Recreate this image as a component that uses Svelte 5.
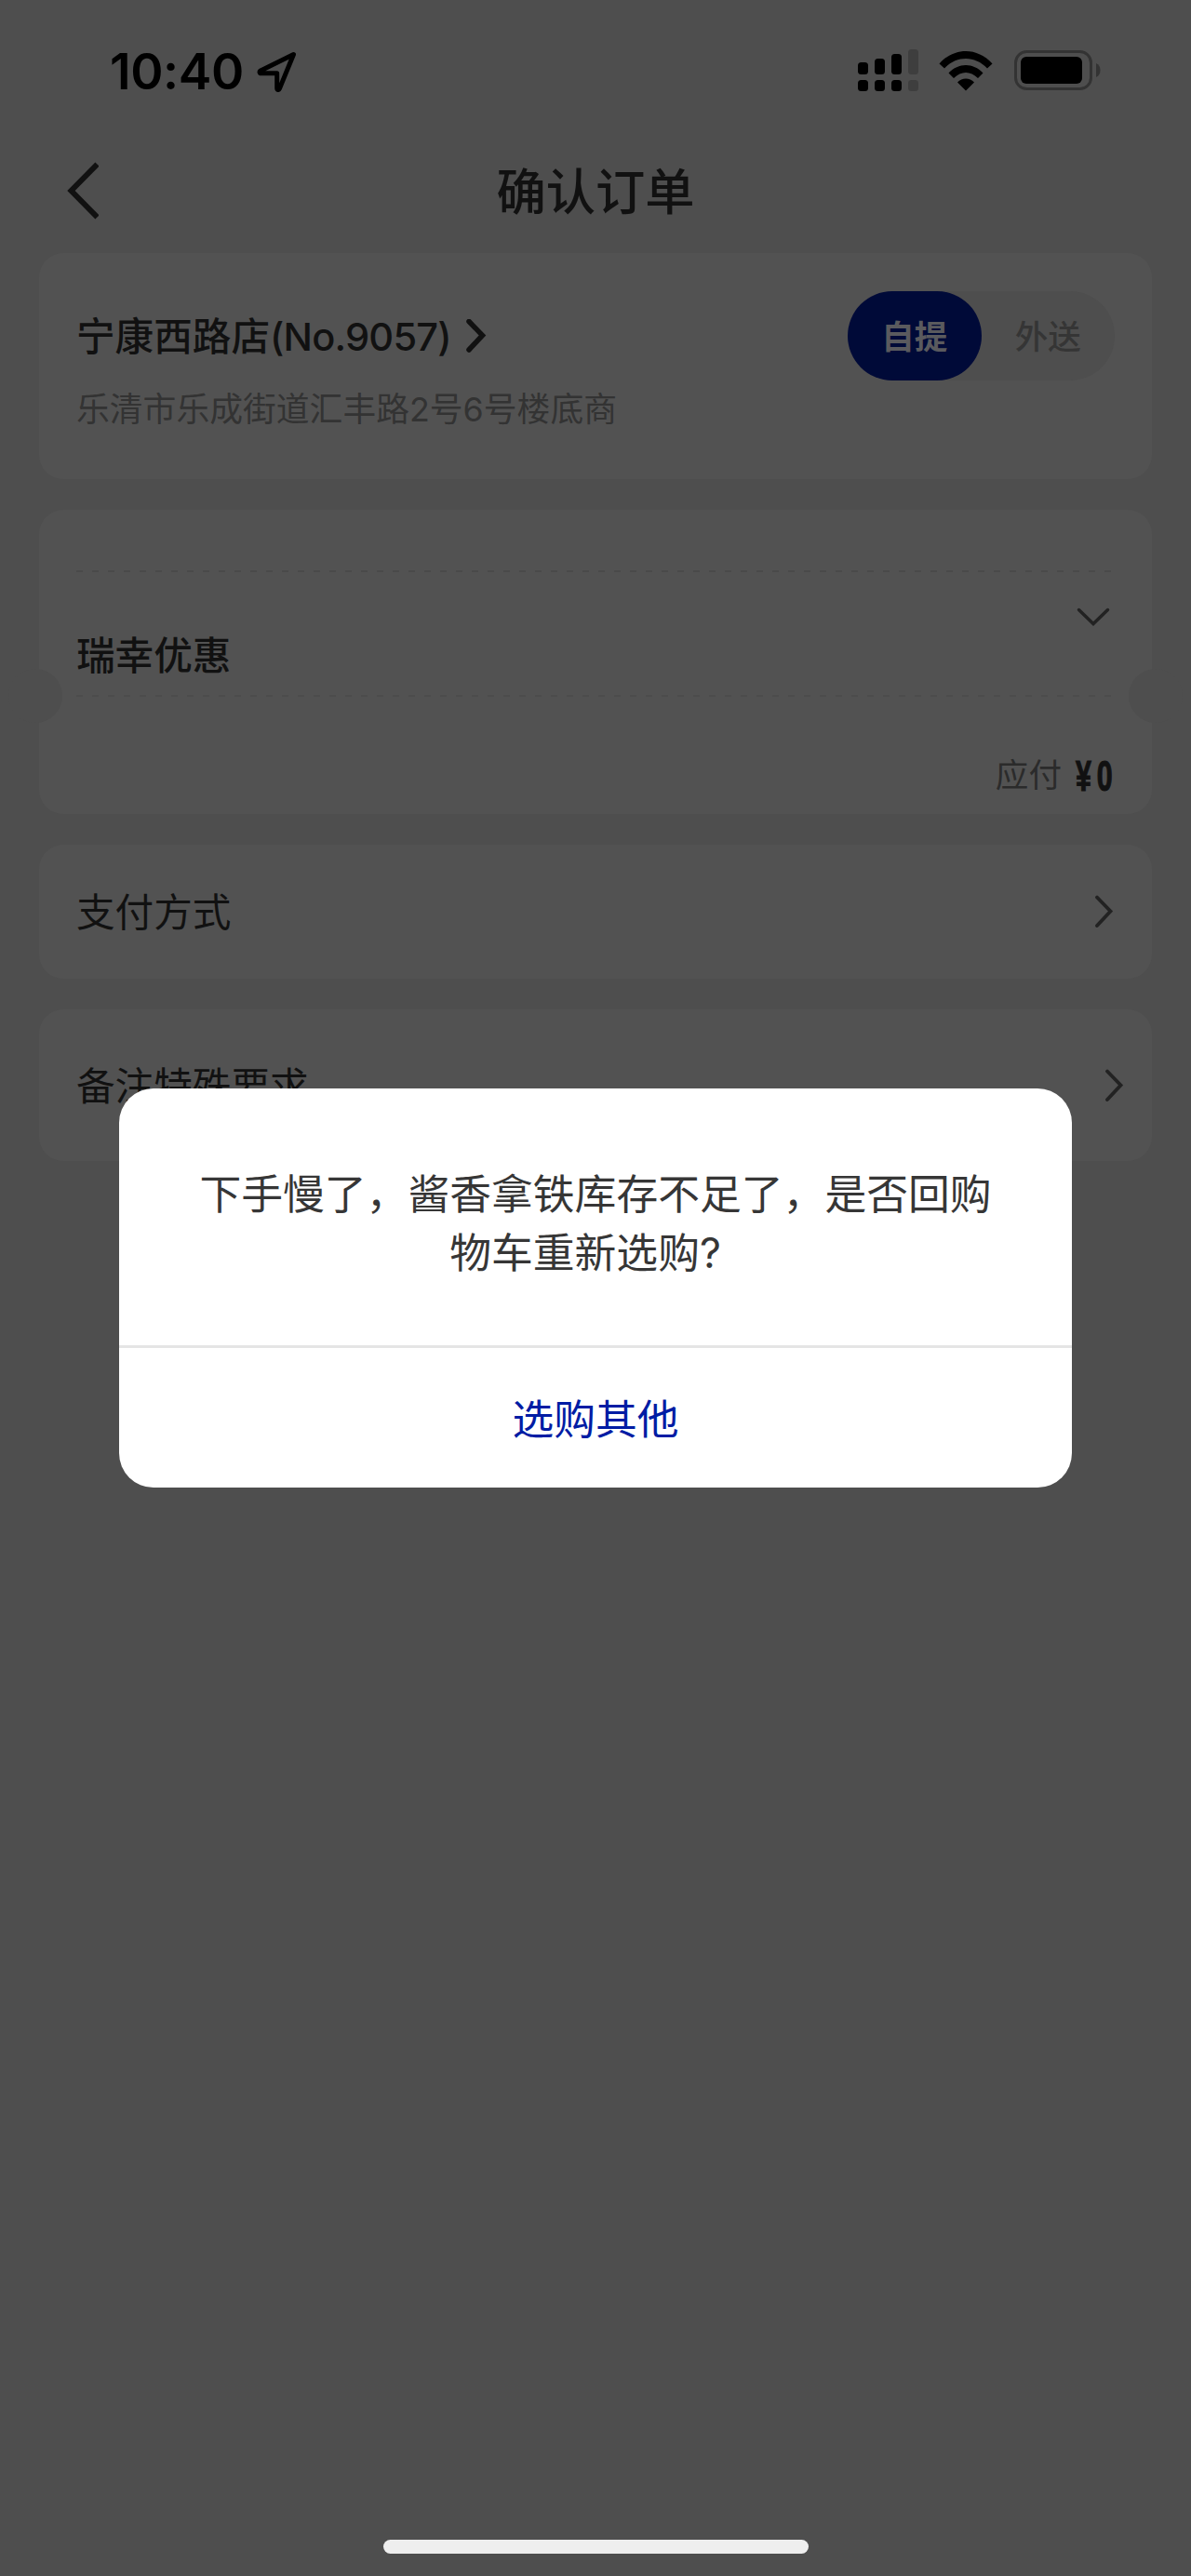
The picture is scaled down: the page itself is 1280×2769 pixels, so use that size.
<script lang="ts">
    const store = {
        name: "宁康西路店",
        number: "(No.9057)",
        address: "乐清市乐成街道汇丰路2号6号楼底商"
    };

    const signalBars = [
        { x: 0, top: 14 },
        { x: 18, top: 10 },
        { x: 36, top: 5 },
        { x: 54, top: 0 }
    ];

    let delivery = $state("自提");
</script>

{#snippet arrow()}
    <svg class="arrow" width="22" height="36" viewBox="0 0 22 36">
        <path d="M3 2.500 17.500 17.500 3 33" />
    </svg>
{/snippet}

<div class="page">
    <div class="status-bar">
        <div class="status-left">
            <span class="time">10:40</span>
            <svg width="44" height="44" viewBox="0 0 44 44">
                <path d="M39.500 3.500 4 21c-1.600.9-1 2.800.7 2.800h17v16c0 2 2 2.300 2.700.6z" fill="none" stroke="#000" stroke-width="5" stroke-linejoin="round" />
            </svg>
        </div>
        <div class="status-right">
            <svg width="65" height="46" viewBox="0 0 65 46">
                {#each signalBars as bar, i}
                    <g fill={i === 3 ? "#3e3e3e" : "#000"}>
                        <rect x={bar.x} y={bar.top} width="11" height={27 - bar.top} rx="3.500" />
                        <rect x={bar.x} y="33" width="11" height="12" rx="3.500" />
                    </g>
                {/each}
            </svg>
            <svg class="wifi" width="58" height="43" viewBox="0 0 58 43">
                <path d="M0.500 13.500C16.500-4.500 41.500-4.500 57.500 13.500L52 18.500C39 4.500 19 4.500 6 18.500Z" />
                <path d="M10.500 23.500C21 12 37 12 47.500 23.500L42 29C34 21 24 21 16 29Z" />
                <path d="M20 33.500C25 28 33 28 38 33.500L29 42.500Z" />
            </svg>
            <svg class="battery" width="93" height="44" viewBox="0 0 93 44">
                <rect x="1.500" y="1.500" width="81" height="40" rx="12" fill="none" stroke="#333" stroke-width="3" />
                <rect x="7" y="7" width="66" height="29" rx="6" />
                <path d="M88 14c6 2 6 13 0 15z" fill="#333" />
            </svg>
        </div>
    </div>

    <div class="nav">
        <svg class="back" width="36" height="64" viewBox="0 0 36 64">
            <path d="M34.500 3.500 6.500 32 34.500 60.500" fill="none" stroke="#111" stroke-width="6" />
        </svg>
        <h1>确认订单</h1>
    </div>

    <main>
        <section class="card store">
            <div class="store-info">
                <div class="store-name">
                    <span>{store.name}<span class="store-number">{store.number}</span></span>
                    {@render arrow()}
                </div>
                <p>{store.address}</p>
            </div>
            <div class="toggle">
                {#each ["自提", "外送"] as option}
                    <button class:active={delivery === option} onclick={() => delivery = option}>{option}</button>
                {/each}
            </div>
        </section>

        <section class="card order">
            <div class="dashed"></div>
            <div class="discount">
                <span>瑞幸优惠</span>
                <svg width="36" height="20" viewBox="0 0 36 20">
                    <path d="M2.500 2.500 18 17.500 33.500 2.500" fill="none" stroke="#222" stroke-width="3.500" stroke-linecap="round" />
                </svg>
            </div>
            <div class="dashed light"></div>
            <div class="total">
                <span>应付</span>
                <span class="price">¥0</span>
            </div>
        </section>

        <section class="card payment">
            <span>支付方式</span>
            {@render arrow()}
        </section>

        <section class="card note">
            <span>备注特殊要求</span>
            {@render arrow()}
        </section>
    </main>

    <div class="modal">
        <p>下手慢了，酱香拿铁库存不足了，是否回购<br /><span class="last-line">物车重新选购?</span></p>
        <button>选购其他</button>
    </div>

    <div class="home-indicator"></div>
</div>

<style>
    :global(body) {
        margin: 0;
        background: #4e4e4e;
    }

    .page {
        position: relative;
        box-sizing: border-box;
        width: 1280px;
        height: 2769px;
        overflow: hidden;
        background: #4e4e4e;
        color: #111;
        font-family: Inter, "Noto Sans CJK SC", sans-serif;
    }

    svg {
        display: block;
        flex: none;
    }

    button {
        border: none;
        padding: 0;
        background: none;
        font-family: inherit;
        cursor: pointer;
    }

    .status-bar {
        display: flex;
        justify-content: space-between;
        align-items: center;
        height: 152px;
        padding: 0 97px 0 118px;
        color: #000;
    }

    .status-left {
        display: flex;
        align-items: center;
        gap: 14px;
        padding-top: 1px;
    }

    .time {
        width: 144px;
        font-size: 53.5px;
        font-weight: 600;
        letter-spacing: -0.4px;
        white-space: nowrap;
    }

    .status-right {
        display: flex;
        align-items: center;
    }

    .wifi {
        margin-left: 22px;
    }

    .battery {
        margin-left: 23px;
    }

    .nav {
        display: grid;
        grid-template-columns: 200px 1fr 200px;
        align-items: center;
        height: 106px;
    }

    .back {
        margin-left: 70px;
    }

    h1 {
        margin: 0;
        padding-top: 4px;
        font-size: 53.3px;
        font-weight: 500;
        line-height: 80px;
        text-align: center;
    }

    main {
        display: flex;
        flex-direction: column;
        gap: 33px;
        padding: 14px 42px 0;
    }

    .card {
        box-sizing: border-box;
        padding: 0 40px;
        border-radius: 26px;
        background: #525252;
        font-size: 41.6px;
    }

    .store {
        display: flex;
        justify-content: space-between;
        height: 243px;
        padding-top: 41px;
    }

    .store-name {
        display: flex;
        align-items: center;
        gap: 17px;
        height: 96px;
        font-weight: 500;
    }

    .store-name > span {
        padding-bottom: 4px;
    }

    .store-number {
        letter-spacing: -0.8px;
    }

    .store p {
        margin: 0;
        padding-top: 1px;
        color: #333;
        font-size: 35.8px;
        line-height: 60px;
    }

    .arrow path {
        fill: none;
        stroke: #222;
        stroke-width: 3.8px;
        stroke-linecap: round;
    }

    .store-name .arrow {
        margin-left: -1px;
    }

    .store-name .arrow path {
        stroke: #111;
        stroke-width: 5.5px;
    }

    .toggle {
        display: flex;
        width: 287px;
        height: 96px;
        border-radius: 48px;
        background: #4e4e4e;
    }

    .toggle button {
        flex: 1;
        padding-bottom: 4px;
        border-radius: 48px;
        color: #353535;
        font-size: 35.6px;
        font-weight: 500;
    }

    .toggle .active {
        background: #000a38;
        color: #5a5a5e;
        font-weight: 700;
    }

    .order {
        position: relative;
        height: 327px;
        padding-top: 65px;
    }

    /* ticket notches */
    .order::before,
    .order::after {
        content: "";
        position: absolute;
        top: 171px;
        width: 58px;
        height: 58px;
        border-radius: 50%;
        background: #4e4e4e;
    }

    .order::before {
        left: -33px;
    }

    .order::after {
        right: -33px;
    }

    .dashed {
        height: 2px;
        background: repeating-linear-gradient(90deg, #4a4a4a 0 7px, transparent 7px 17px);
    }

    .dashed.light {
        opacity: 0.75;
    }

    .discount {
        display: flex;
        justify-content: space-between;
        height: 132px;
        font-weight: 500;
    }

    .discount span {
        padding-top: 59px;
        line-height: 62px;
    }

    .discount svg {
        margin: 38px 5px 0 0;
    }

    .total {
        display: flex;
        justify-content: flex-end;
        padding-top: 43px;
        color: #2b2b2b;
        font-size: 35.6px;
        line-height: 84px;
    }

    .price {
        width: 42px;
        margin-left: 15px;
        color: #111;
        font-family: "Liberation Sans", sans-serif;
        font-size: 46px;
        font-weight: 700;
        letter-spacing: 9px;
        white-space: nowrap;
        transform: scaleX(0.66);
        transform-origin: left;
        -webkit-text-stroke: 1.2px #111;
    }

    .payment,
    .note {
        display: flex;
        justify-content: space-between;
        align-items: center;
    }

    .payment > span,
    .note > span {
        padding-bottom: 4px;
    }

    .payment {
        height: 144px;
    }

    .note {
        height: 163px;
        padding-right: 29px;
    }

    .modal {
        position: absolute;
        top: 1170px;
        left: 128px;
        width: 1024px;
        height: 429px;
        border-radius: 37px;
        background: #fff;
        text-align: center;
    }

    .modal p {
        box-sizing: border-box;
        height: 279px;
        margin: 0;
        padding-top: 83px;
        border-bottom: 3px solid #e5e5e5;
        color: #363636;
        font-size: 44.8px;
        line-height: 62.5px;
        white-space: nowrap;
    }

    .last-line {
        padding-right: 22px;
    }

    .modal button {
        width: 100%;
        height: 150px;
        padding-bottom: 4px;
        color: #001ca4;
        font-size: 44.8px;
    }

    .home-indicator {
        position: absolute;
        bottom: 24px;
        left: 412px;
        width: 457px;
        height: 15px;
        border-radius: 8px;
        background: #eee;
    }
</style>
